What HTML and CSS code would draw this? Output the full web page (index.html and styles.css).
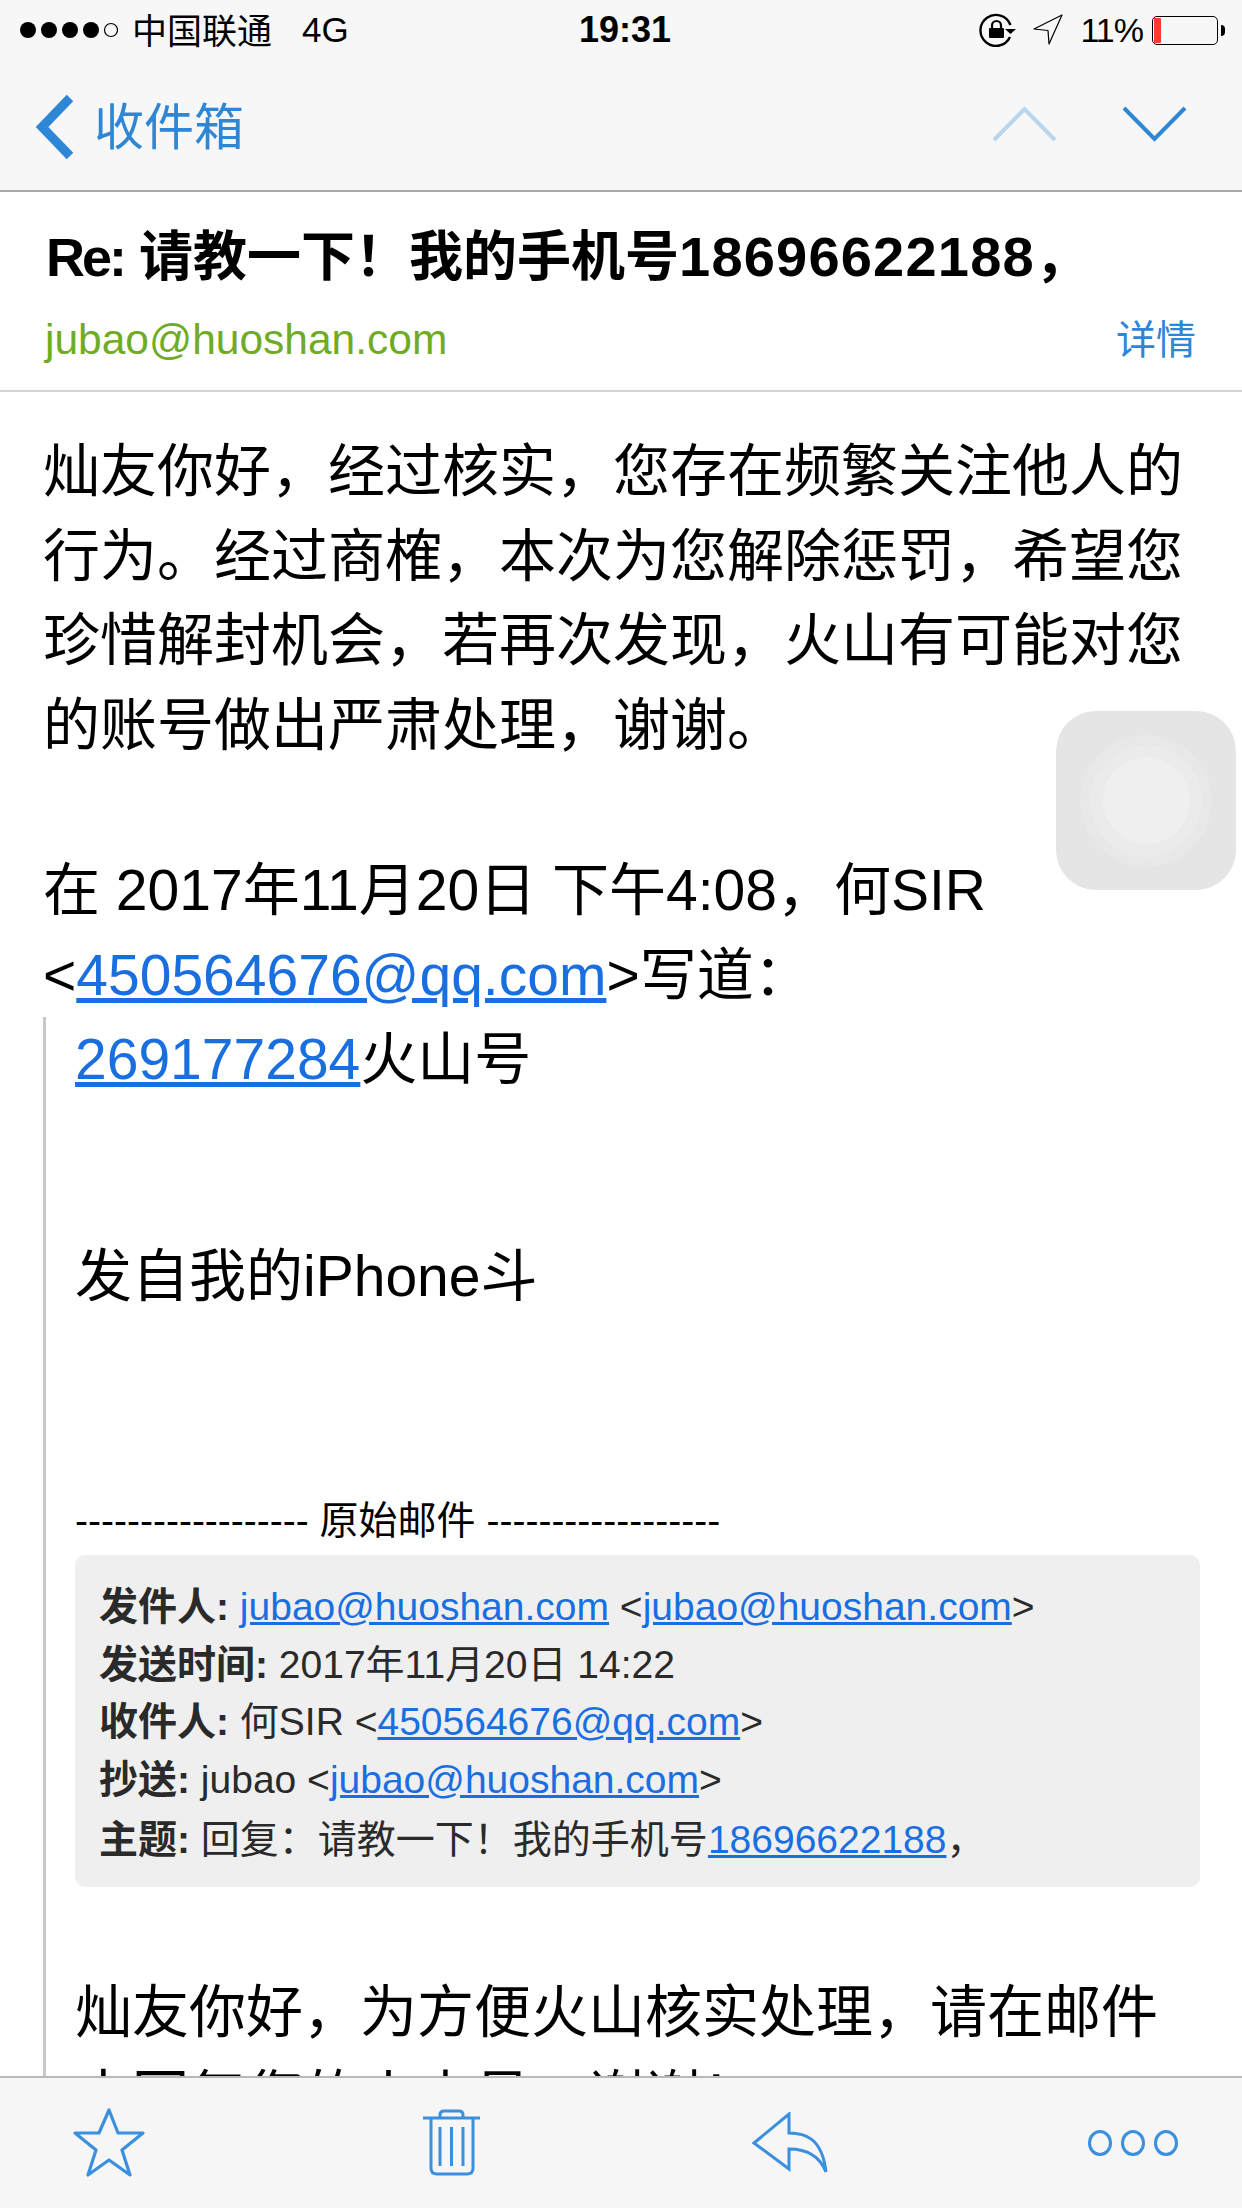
FILE: index.html
```html
<!DOCTYPE html>
<html lang="zh-CN">

<head>
    <meta charset="UTF-8">
    <title>收件箱</title>
    <link rel="stylesheet" href="styles.css">
</head>

<body>
    <div id="screen">
        <div class="status-bar">
            <div class="status-left">
                <svg class="signal" width="98" height="18" viewBox="0 0 98 18">
                    <circle cx="8" cy="9" r="8" />
                    <circle cx="29" cy="9" r="8" />
                    <circle cx="50" cy="9" r="8" />
                    <circle cx="71" cy="9" r="8" />
                    <circle cx="91" cy="9" r="6.500" fill="none" stroke="#000" stroke-width="1.200" />
                </svg>
                <span class="carrier">中国联通</span>
                <span class="network">4G</span>
            </div>
            <div class="status-time">19:31</div>
            <div class="status-right">
                <svg class="rotate-lock" width="38" height="34" viewBox="0 0 38 34">
                    <path d="M31 24A15.500 15.500 0 1 1 31.500 12" fill="none" stroke="#000" stroke-width="2.400" />
                    <path d="M26 16H37L31.500 21Z" />
                    <rect x="10" y="15" width="15" height="10" rx="1" />
                    <path d="M13 16V12.500A4.500 4.500 0 0 1 22 12.500V16" fill="none" stroke="#000" stroke-width="2.200" />
                </svg>
                <svg class="location" width="31" height="32" viewBox="0 0 31 32">
                    <path d="M30 1L2 15L16 16.500L17 30Z" fill="none" stroke="#000" stroke-width="1.200" stroke-linejoin="round" />
                </svg>
                <span class="battery-pct">11%</span>
                <div class="battery">
                    <div class="battery-fill"></div>
                </div>
                <div class="battery-nub"></div>
            </div>
        </div>

        <div class="nav-bar">
            <div class="nav-back">
                <svg width="40" height="66" viewBox="0 0 40 66">
                    <path d="M35 4L7 33L35 62" fill="none" stroke="#2e86d6" stroke-width="9" />
                </svg>
                <span class="nav-back-label">收件箱</span>
            </div>
            <div class="nav-arrows">
                <svg width="65" height="36" viewBox="0 0 65 36">
                    <path d="M2 34L32.500 3L63 34" fill="none" stroke="#b9d6ef" stroke-width="4" />
                </svg>
                <svg width="65" height="36" viewBox="0 0 65 36">
                    <path d="M2 2L32.500 33L63 2" fill="none" stroke="#2e86d6" stroke-width="4" />
                </svg>
            </div>
        </div>

        <div class="mail-head">
            <h1 class="subject"><span class="subject-re">Re:</span> 请教一下<span class="bang">！</span>我的手机号<span class="subject-num">18696622188</span>，</h1>
            <div class="sender-row">
                <span class="sender">jubao@huoshan.com</span>
                <span class="details">详情</span>
            </div>
        </div>

        <div class="mail-body">
            <p class="para">灿友你好，经过核实，您存在频繁关注他人的<br>行为。经过商榷，本次为您解除惩罚，希望您<br>珍惜解封机会，若再次发现，火山有可能对您<br>的账号做出严肃处理，谢谢。</p>
            <p class="para reply-line">在 2017年11月20日 下午4:08，何SIR<br>&lt;<a href="#">450564676@qq.com</a>&gt;写道：</p>
            <div class="quote">
                <p class="para"><a href="#">269177284</a>火山号</p>
                <p class="para signature">发自我的iPhone斗</p>
                <p class="orig-title">------------------ 原始邮件 ------------------</p>
                <div class="meta">
                    <div><b>发件人:</b> <a href="#">jubao@huoshan.com</a> &lt;<a href="#">jubao@huoshan.com</a>&gt;</div>
                    <div><b>发送时间:</b> 2017年11月20日 14:22</div>
                    <div><b>收件人:</b> 何SIR &lt;<a href="#">450564676@qq.com</a>&gt;</div>
                    <div><b>抄送:</b> jubao &lt;<a href="#">jubao@huoshan.com</a>&gt;</div>
                    <div><b>主题:</b> 回复：请教一下<span class="bang">！</span>我的手机号<a href="#">18696622188</a>，</div>
                </div>
                <p class="para after-meta">灿友你好，为方便火山核实处理，请在邮件<br>中回复您的火山号，谢谢！</p>
            </div>
        </div>

        <div class="toolbar">
            <svg width="72" height="72" viewBox="0 0 72 72">
                <path d="M36 3L45 26H70L49 43L57 68L36 53L15 68L23 43L2 26H26Z" fill="none" stroke="#3a8fdf" stroke-width="3.200" stroke-linejoin="round" />
            </svg>
            <svg class="tool-trash" width="62" height="70" viewBox="0 0 62 70">
                <path d="M2 10H59" stroke="#3a8fdf" stroke-width="3" />
                <path d="M19 10V7Q19 3 23 3H38Q42 3 42 7V10" fill="none" stroke="#3a8fdf" stroke-width="3" />
                <path d="M10 10V60Q10 66 16 66H46Q52 66 52 60V10" fill="none" stroke="#3a8fdf" stroke-width="3" />
                <path d="M19 19V58M30.500 19V58M42 19V58" stroke="#3a8fdf" stroke-width="3" />
            </svg>
            <svg class="tool-reply" width="76" height="62" viewBox="0 0 76 62">
                <path d="M2 31L37 2V21C52 21 70 25 74 60C68 45 55 37 37 37V57Z" fill="none" stroke="#3a8fdf" stroke-width="3" stroke-linejoin="miter" />
            </svg>
            <svg class="tool-more" width="92" height="28" viewBox="0 0 92 28">
                <ellipse cx="13" cy="14" rx="10.500" ry="11.500" fill="none" stroke="#3a8fdf" stroke-width="3" />
                <ellipse cx="46" cy="14" rx="10.500" ry="11.500" fill="none" stroke="#3a8fdf" stroke-width="3" />
                <ellipse cx="79" cy="14" rx="10.500" ry="11.500" fill="none" stroke="#3a8fdf" stroke-width="3" />
            </svg>
        </div>

        <div class="assistive-touch">
            <div class="touch-ring-outer">
                <div class="touch-ring-mid">
                    <div class="touch-ring-inner"></div>
                </div>
            </div>
        </div>
    </div>
</body>

</html>
```
FILE: styles.css
```css
body {
    margin: 0;
    font-family: "Liberation Sans", "Noto Sans CJK SC", sans-serif;
    background-color: #fff;
    color: #000;
}

p {
    margin: 0;
}

a {
    color: #1a6fe0;
    text-decoration: underline;
}

.bang {
    font-family: "Noto Sans CJK TC", sans-serif;
}

#screen {
    position: relative;
    width: 1242px;
    height: 2208px;
    display: flex;
    flex-direction: column;
    overflow: hidden;
}

/* status bar */
.status-bar {
    height: 64px;
    flex-shrink: 0;
    background-color: #f7f7f7;
    display: grid;
    grid-template-columns: 1fr auto 1fr;
    align-items: center;
    padding: 0 17px 4px 20px;
    box-sizing: border-box;
    font-size: 35px;
}

.status-left {
    display: flex;
    align-items: center;
}

.carrier {
    margin-left: 14px;
    padding-bottom: 3px;
}

.network {
    margin-left: 30px;
}

.status-time {
    font-size: 36px;
    font-weight: bold;
    padding-left: 5px;
}

.status-right {
    display: flex;
    align-items: center;
    justify-content: flex-end;
}

.location {
    margin-left: 15px;
}

.battery-pct {
    margin-left: 17px;
    font-size: 34px;
    letter-spacing: -1px;
}

.battery {
    width: 66px;
    height: 29px;
    margin-left: 9px;
    padding: 1px;
    box-sizing: border-box;
    border: 1.500px solid #000;
    border-radius: 5px;
}

.battery-fill {
    width: 7px;
    height: 100%;
    background-color: #ff3b30;
    border-radius: 1px;
}

.battery-nub {
    width: 4px;
    height: 11px;
    margin-left: 3px;
    background-color: #000;
    border-radius: 0 4px 4px 0;
}

/* nav bar */
.nav-bar {
    height: 128px;
    flex-shrink: 0;
    background-color: #f7f7f7;
    border-bottom: 2px solid #a8a8a8;
    display: flex;
    align-items: center;
    justify-content: space-between;
    padding: 0 55px 0 35px;
    box-sizing: border-box;
}

.nav-back {
    display: flex;
    align-items: center;
    gap: 19px;
    color: #2e86d6;
    font-size: 50px;
}

.nav-back-label {
    padding-bottom: 8px;
}

.nav-arrows {
    display: flex;
    gap: 65px;
    margin-bottom: 6px;
}

/* mail header */
.mail-head {
    height: 200px;
    flex-shrink: 0;
    box-sizing: border-box;
    border-bottom: 2px solid #d4d4d4;
    padding: 29px 46px 0 46px;
}

.subject {
    margin: 0;
    font-size: 54px;
    line-height: 64px;
    font-weight: bold;
    white-space: nowrap;
}

.subject-re {
    letter-spacing: -3px;
}

.subject-num {
    font-size: 56px;
    letter-spacing: 1.200px;
}

.sender-row {
    display: flex;
    justify-content: space-between;
    align-items: center;
    margin-top: 19px;
    margin-left: -1px;
}

.sender {
    color: #6fac24;
    font-size: 42.500px;
}

.details {
    color: #2e86d6;
    font-size: 40px;
    padding-bottom: 5px;
}

/* mail body */
.mail-body {
    flex: 1;
    min-height: 0;
    overflow: hidden;
    padding: 37px 42px 0 43px;
}

.para {
    font-size: 57px;
    line-height: 84.500px;
}

.reply-line {
    margin-top: 81px;
}

.quote {
    border-left: 3px solid #c8c8c8;
    padding-left: 29px;
}

.signature {
    margin-top: 132px;
}

.orig-title {
    font-size: 39px;
    line-height: 56px;
    margin-top: 175px;
}

.meta {
    margin-top: 6px;
    height: 332px;
    box-sizing: border-box;
    padding: 23px 25px 0 24px;
    background-color: #efefef;
    border-radius: 10px;
    font-size: 39px;
    line-height: 57.500px;
    color: #2a2a2a;
    white-space: nowrap;
}

.after-meta {
    margin-top: 83px;
}

/* bottom toolbar */
.toolbar {
    height: 132px;
    flex-shrink: 0;
    box-sizing: border-box;
    background-color: #f6f6f6;
    border-top: 2px solid #b8b8bc;
    display: flex;
    align-items: center;
    padding: 0 63px 0 73px;
}

.tool-trash {
    margin-left: 276px;
}

.tool-reply {
    margin-left: 269px;
}

.tool-more {
    margin-left: auto;
}

/* assistive touch button */
.assistive-touch {
    position: absolute;
    left: 1056px;
    top: 711px;
    width: 180px;
    height: 179px;
    border-radius: 40px;
    background-color: #e5e5e5;
    display: flex;
    align-items: center;
    justify-content: center;
}

.touch-ring-outer,
.touch-ring-mid,
.touch-ring-inner {
    border-radius: 50%;
    display: flex;
    align-items: center;
    justify-content: center;
}

.touch-ring-outer {
    width: 132px;
    height: 132px;
    background-color: #e8e8e8;
}

.touch-ring-mid {
    width: 112px;
    height: 112px;
    background-color: #ebebeb;
}

.touch-ring-inner {
    width: 87px;
    height: 87px;
    background-color: #efefef;
}
```
